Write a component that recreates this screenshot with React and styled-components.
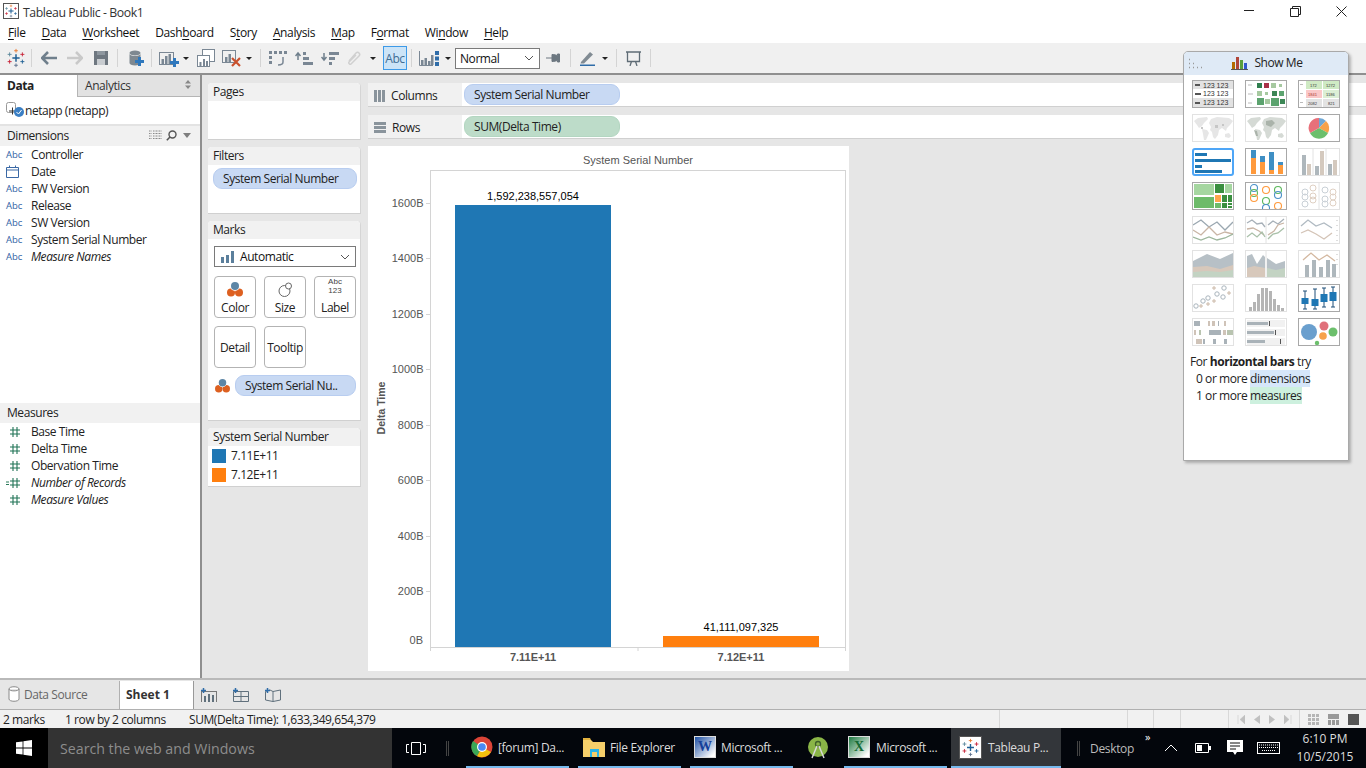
import React from "react";
import styled, { createGlobalStyle } from "styled-components";

const Global = createGlobalStyle`
  html, body { margin: 0; padding: 0; background: #e6e6e6; }
  body { font-family: "Open Sans", "Noto Sans", sans-serif; font-size: 12px; color: #1c1c1c; letter-spacing: -0.43px; }
  * { box-sizing: border-box; }
`;

const Screen = styled.div`position: relative; width: 1366px; height: 768px; overflow: hidden; display: flex; flex-direction: column;`;

/* ---------- title + menu ---------- */
const TitleBar = styled.div`height: 22px; background: #fff; display: flex; align-items: center; padding-left: 3px; flex: none;`;
const TitleIcon = styled.div`width: ${p => p.$s || 16}px; height: ${p => p.$s || 16}px; border: 1px solid #555; display: flex; align-items: center; justify-content: center; background: #fff; flex: none;`;
const TitleText = styled.span`margin-left: 4px; font-size: 12.3px; color: #333; position: relative; top: 1px;`;
const WinControls = styled.div`margin-left: auto; display: flex; align-items: center; height: 20px; margin-right: 2px;`;
const WinBtn = styled.div`width: 46px; height: 20px; display: flex; align-items: center; justify-content: center;`;
const MenuBar = styled.div`height: 21px; background: #fff; display: flex; align-items: center; gap: 16px; padding-left: 8px; flex: none;`;
const MenuItem = styled.span`font-size: 12px; color: #111; letter-spacing: -0.38px; u { text-underline-offset: 2px; text-decoration-thickness: 1px; }`;

/* ---------- toolbar ---------- */
const Toolbar = styled.div`height: 32px; background: #f0f0f0; border-bottom: 2px solid #8f8f8f; display: flex; align-items: center; padding-left: 5px; flex: none;`;
const Tool = styled.div`margin-left: ${p => p.$ml || 0}px; width: ${p => p.$w}px; height: 20px; display: flex; align-items: center; justify-content: center; flex: none;`;
const ToolSep = styled.div`margin-left: ${p => p.$ml}px; width: 1px; height: 18px; background: #d4d4d4; flex: none;`;
const Caret = styled.div`margin-left: ${p => p.$ml}px; margin-right: -1px; width: 0; height: 0; border: 3px solid transparent; border-top: 3px solid #222; border-bottom: 0; flex: none;`;
const AbcToggle = styled.div`margin-left: ${p => p.$ml}px; width: 24px; height: 24px; background: #cce4f7; border: 1px solid #3d9ae8; color: #3f6d94; font-size: 12px; display: flex; align-items: center; justify-content: center; flex: none;`;
const Select = styled.div`margin-left: ${p => p.$ml}px; width: ${p => p.$w}px; height: 21px; background: #fff; border: 1px solid #7a7a7a; display: flex; align-items: center; justify-content: space-between; padding: 0 5px 0 4px; font-size: 12px; color: #111; flex: none;`;

/* ---------- body ---------- */
const Body = styled.div`flex: 1; display: flex; min-height: 0; background: #e6e6e6; border-bottom: 2px solid #b9b9b9;`;
const Sidebar = styled.div`width: 202px; flex: none; background: #fff; border-right: 2px solid #8f8f8f; display: flex; flex-direction: column;`;
const TabRow = styled.div`height: 22px; display: flex; flex: none;`;
const DataTab = styled.div`width: 77px; font-weight: 700; color: #222; padding: 2px 0 0 7px;`;
const AnalyticsTab = styled.div`flex: 1; background: #e2e2e2; border-left: 1px solid #b5b5b5; border-bottom: 1px solid #b5b5b5; padding: 2px 0 0 7px; color: #333; display: flex; justify-content: space-between; align-items: flex-start;`;
const SortArrows = styled.div`margin: 3px 9px 0 0; display: flex;`;
const SourceRow = styled.div`height: 29px; flex: none; border-bottom: 2px solid #e3e3e3; display: flex; align-items: center; padding: 0 0 1px 6px; gap: 0; color: #222;`;
const SectionHead = styled.div`height: 20px; flex: none; background: #f1f1f1; display: flex; align-items: center; padding: 0 0 2px 7px; color: #222; justify-content: space-between;`;
const HeadTools = styled.div`display: flex; gap: 4px; align-items: center; margin-right: 7px;`;
const FieldList = styled.div`height: ${p => p.$h}px; flex: none;`;
const Field = styled.div`height: 17px; display: flex; align-items: center; font-style: ${p => (p.$italic ? "italic" : "normal")}; color: #222;`;
const FieldIcon = styled.div`width: 31px; flex: none; padding-left: 6px; display: flex; align-items: center; color: #2f62a5; font-size: 9.5px; letter-spacing: 0; font-style: normal;`;

const CardsCol = styled.div`width: 153px; margin-left: 6px; padding-top: 8px; flex: none; display: flex; flex-direction: column; gap: 7px;`;
const Card = styled.div`height: ${p => p.$h}px; background: #fff; border-radius: 4px 4px 0 0; border-right: 1px solid #d5d5d5; border-bottom: 1px solid #d0d0d0; flex: none;`;
const CardHead = styled.div`height: 18px; background: #f1f1f1; border-radius: 4px 4px 0 0; padding: 0 0 2px 5px; display: flex; align-items: center; color: #222;`;
const Pill = styled.div`height: 21px; border-radius: 9px; background: ${p => (p.$green ? "#bddcc9" : "#c8d9f3")}; border: 1px solid ${p => (p.$green ? "#b3d6c1" : "#b8cdf0")}; display: flex; align-items: center; padding-left: 9px; color: #222; width: ${p => p.$w}px; flex: none;`;
const FilterBody = styled.div`padding: 3px 0 0 5px;`;
const MarksBody = styled.div`padding: 7px 0 0 6px; display: flex; flex-direction: column;`;
const MarkSelect = styled(Select)`margin: 0; width: 142px; padding: 0 5px; font-size: 12px;`;
const MarkGroup = styled.span`display: flex; align-items: center; gap: 6px; margin-left: 1px;`;
const MarkGrid = styled.div`margin-top: 9px; display: grid; grid-template-columns: repeat(3, 42px); grid-auto-rows: 42px; gap: 8px;`;
const MarkBtn = styled.div`border: 1px solid #b3b3b3; border-radius: 4px; background: #fff; display: flex; flex-direction: column; align-items: center; justify-content: ${p => (p.$solo ? "center" : "flex-end")}; padding-bottom: ${p => (p.$solo ? 0 : 1)}px; color: #222;`;
const MarkIconSlot = styled.div`height: 20px; display: flex; align-items: center; justify-content: center; color: #444;`;
const AbcStack = styled.div`font-family: "Liberation Sans", sans-serif; font-size: 8px; line-height: 9.5px; text-align: center; letter-spacing: 0; margin-top: -6px;`;
const MarkPillRow = styled.div`margin-top: 7px; display: flex; align-items: center; gap: 5px; margin-left: 1px;`;
const LegendRow = styled.div`height: 19px; display: flex; align-items: center; padding-left: 4px; gap: 5px; color: #222;`;
const Swatch = styled.div`width: 14px; height: 14px; background: ${p => p.$c};`;

const Main = styled.div`flex: 1; margin-left: 7px; padding-top: 8px; display: flex; flex-direction: column; min-width: 0;`;
const Shelf = styled.div`height: 24px; margin-bottom: 8px; display: flex; background: #fff; border-bottom: 1px solid #d0d0d0; flex: none;`;
const ShelfLabel = styled.div`width: 94px; background: #f1f1f1; display: flex; align-items: center; gap: 6px; padding: 2px 0 0 6px; color: #222; flex: none;`;
const ShelfPills = styled.div`padding: 1px 0 0 2px; display: flex;`;
const ChartCard = styled.div`width: 481px; height: 525px; margin-top: -1px; background: #fff; flex: none;`;

/* ---------- show me ---------- */
const ShowMe = styled.div`position: absolute; left: 1183px; top: 51px; width: 166px; height: 410px; background: #fff; border: 1px solid #a9a9a9; border-radius: 5px 5px 0 0; box-shadow: 2px 2px 3px rgba(0,0,0,.25);`;
const ShowHead = styled.div`position: relative; height: 23px; background: #dfeaf6; border-radius: 4px 4px 0 0; display: flex; align-items: center; justify-content: center; gap: 6px; color: #222; padding: 0 0 2px 2px;`;
const Grip = styled.svg`position: absolute; left: 4px; top: 6px;`;
const ThumbGrid = styled.div`margin: 5px 0 0 8px; display: grid; grid-template-columns: repeat(3, 42px); grid-auto-rows: 28px; column-gap: 11px; row-gap: 6px;`;
const Thumb = styled.div`width: 42px; height: 28px; background: #fff; display: flex; border: ${p => (p.$s === "sel" ? "2px solid #4ea6f7" : p.$s === "on" ? "1px solid #a8a8a8" : "1px solid #e2e2e2")}; border-radius: ${p => (p.$s === "sel" ? 3 : 0)}px; svg { width: 100%; height: 100%; display: block; }`;
const Hint = styled.div`margin: 7px 0 0 6px; line-height: 17px; color: #222;`;
const HintLine = styled.div`padding-left: ${p => (p.$in ? 6 : 0)}px;`;
const Mark = styled.span`background: ${p => p.$c};`;

/* ---------- tabs / status ---------- */
const SheetBar = styled.div`height: 29px; background: #e6e6e6; flex: none; display: flex; padding-top: 1px;`;
const SourceTab = styled.div`width: 120px; display: flex; align-items: center; gap: 4px; padding: 0 0 2px 8px; color: #666; border-right: 1px solid #b0b0b0;`;
const SheetTab = styled.div`width: 74px; background: #fff; font-weight: 700; color: #333; display: flex; align-items: center; padding: 0 0 2px 6px; border-right: 1px solid #999; letter-spacing: 0;`;
const SheetTools = styled.div`display: flex; align-items: center; gap: 16px; padding-left: 7px;`;
const StatusBar = styled.div`height: 19px; background: #f1f1f1; border-top: 1px solid #b0b0b0; flex: none; display: flex; align-items: center; color: #222; position: relative;`;
const StatusText = styled.span`margin-left: ${p => p.$ml || 0}px; width: ${p => p.$w}px; flex: none;`;
const StatusCell = styled.div`width: ${p => p.$w}px; height: 100%; border-left: 1px solid #d8d8d8; display: flex; align-items: center; justify-content: ${p => (p.$around ? "space-around" : "flex-start")}; flex: none; padding: 0 ${p => (p.$around ? 3 : 0)}px;`;
const StatusFill = styled.div`flex: 1;`;

const Taskbar = styled.div`height: 40px; background: #03060c; flex: none; display: flex; align-items: stretch; color: #dcdcdc; font-size: 12px; letter-spacing: -0.33px;`;
const StartBtn = styled.div`width: 48px; display: flex; align-items: center; justify-content: center; background: #000;`;
const SearchBox = styled.div`width: 344px; background: #333; color: #8d8d8d; font-size: 14.2px; display: flex; align-items: center; padding-left: 12px; letter-spacing: 0;`;
const TaskIcon = styled.div`margin-left: ${p => p.$ml}px; width: ${p => p.$w}px; flex: none; display: flex; align-items: center; justify-content: center;`;
const TaskSep = styled.div`margin-left: ${p => p.$ml}px; width: 3px; flex: none; align-self: center; height: 15px; border-left: 1px solid #444; border-right: 1px solid #444;`;
const TaskApp = styled.div`margin-left: ${p => p.$ml}px; width: ${p => p.$w}px; flex: none; display: flex; align-items: center; gap: ${p => p.$gap || 5}px; padding-left: ${p => p.$pl || 5}px; background: ${p => (p.$active ? "#33363a" : "transparent")}; border-bottom: 2px solid ${p => (p.$line ? "#76b9ed" : "transparent")}; white-space: nowrap;`;
const WordBadge = styled.div`width: 22px; height: 22px; background: linear-gradient(135deg,#1d4fa3,#fff 90%); color: #16409a; font-weight: 700; font-size: 14px; display: flex; align-items: center; justify-content: center; border: 1px solid #ddd; letter-spacing: 0; font-family: "Liberation Serif", serif;`;
const ExcelBadge = styled(WordBadge)`background: linear-gradient(135deg,#1d7a42,#fff 90%); color: #156b36;`;
const DesktopLabel = styled.div`margin-left: 10px; width: 55px; flex: none; align-self: center; color: #bbb;`;
const More = styled.div`width: 10px; margin-top: 3px; flex: none; font-size: 11px; line-height: 11px; color: #fff; letter-spacing: -1px;`;
const Clock = styled.div`margin-left: 9px; width: 72px; flex: none; text-align: center; align-self: center; line-height: 18px; color: #ddd; letter-spacing: 0;`;

/* ---------- drawings ---------- */
const Cross = ({ x, y, s = 3, w = 1, c }) => (
  <path d={`M${x - s} ${y}H${x + s}M${x} ${y - s}V${y + s}`} stroke={c} strokeWidth={w} fill="none" />
);
const TableauMark = ({ size = 22 }) => (
  <svg width={size} height={size} viewBox="0 0 22 22">
    <Cross x={11} y={11} s={4} w={1.6} c="#1f5f94" />
    <Cross x={11} y={3} s={2} w={1} c="#e8762c" />
    <Cross x={11} y={19} s={2} w={1} c="#5b6f8c" />
    <Cross x={4} y={7} s={2.2} w={1} c="#59879b" />
    <Cross x={18} y={7} s={2.2} w={1} c="#c72035" />
    <Cross x={4} y={15} s={2.2} w={1} c="#c72035" />
    <Cross x={18} y={15} s={2.2} w={1} c="#1f5f94" />
  </svg>
);
const Ic = {
  Back: () => <svg width="16" height="14" viewBox="0 0 16 14"><path d="M7 1 1 7l6 6M1 7h15" stroke="#6f7f8c" strokeWidth="2.6" fill="none" /></svg>,
  Fwd: () => <svg width="16" height="14" viewBox="0 0 16 14"><path d="M9 1l6 6-6 6M15 7H0" stroke="#c9c9c9" strokeWidth="2.6" fill="none" /></svg>,
  Save: () => <svg width="14" height="14" viewBox="0 0 14 14"><path d="M0 0h14v14H0z" fill="#6e7780" /><rect x="3" y="8" width="8" height="6" fill="#c8ccd0" /><rect x="3" y="0" width="8" height="4" fill="#8e979f" /></svg>,
  NewData: () => <svg width="15" height="17" viewBox="0 0 15 17"><ellipse cx="6" cy="3" rx="5.5" ry="2.4" fill="#7e8890" /><path d="M.5 4v9c0 1.5 2.5 2.5 5.5 2.5s5.500-1 5.500-2.500V4c-1 1.500-3 2-5.500 2S1.500 5.500.5 4z" fill="#7e8890" /><path d="M10 8h3v3h3v3h-3v3h-3v-3H7v-3h3z" fill="#2f78bd" transform="translate(-1 -1)" /></svg>,
  NewWs: () => <svg width="20" height="17" viewBox="0 0 20 17"><rect x=".5" y="2.500" width="14" height="12" fill="none" stroke="#7a8794" /><rect x="2.500" y="9" width="2.500" height="5" fill="#7a8794" /><rect x="6" y="6" width="2.500" height="8" fill="#7a8794" /><rect x="9.500" y="4" width="2.500" height="10" fill="#7a8794" /><path d="M14 8h3v3h3v3h-3v3h-3v-3h-3v-3h3z" fill="#2f78bd" /></svg>,
  Dup: () => <svg width="18" height="18" viewBox="0 0 18 18"><rect x="5.500" y=".5" width="12" height="12" fill="#fff" stroke="#7a8794" /><rect x=".5" y="6.500" width="12" height="11" fill="#fff" stroke="#7a8794" /><rect x="2.500" y="13" width="2" height="4" fill="#7a8794" /><rect x="6" y="10" width="2" height="7" fill="#7a8794" /><rect x="9" y="12" width="2" height="5" fill="#7a8794" /></svg>,
  Clear: () => <svg width="19" height="18" viewBox="0 0 19 18"><rect x=".5" y="1.500" width="13" height="12" fill="none" stroke="#7a8794" /><rect x="3" y="8" width="2.500" height="5" fill="#7a8794" /><rect x="6.500" y="5" width="2.500" height="8" fill="#7a8794" /><path d="M10 9l8 8M18 9l-8 8" stroke="#c9502c" strokeWidth="2.200" /></svg>,
  Swap: () => <svg width="18" height="17" viewBox="0 0 18 17"><g fill="#7a8794"><rect x="0" y="1" width="3" height="3" /><rect x="5" y="1" width="3" height="3" /><rect x="10" y="1" width="3" height="3" /><rect x="15" y="1" width="3" height="3" /><rect x="0" y="6" width="3" height="3" /><rect x="0" y="11" width="3" height="3" /></g><path d="M14 7v5c0 2-2 3-5 3" stroke="#7a8794" strokeWidth="1.500" fill="none" /></svg>,
  SortA: () => <svg width="18" height="15" viewBox="0 0 18 15"><path d="M3 9V2M.5 5 3 2l2.500 3" stroke="#6f7f8c" strokeWidth="1.500" fill="none" /><g fill="#7a8794"><rect x="8" y="1" width="3" height="3" /><rect x="8" y="6" width="6" height="3" /><rect x="8" y="11" width="10" height="3" /></g></svg>,
  SortD: () => <svg width="18" height="15" viewBox="0 0 18 15"><path d="M3 2v7M.5 6 3 9l2.500-3" stroke="#6f7f8c" strokeWidth="1.500" fill="none" /><g fill="#7a8794"><rect x="8" y="1" width="10" height="3" /><rect x="8" y="6" width="6" height="3" /><rect x="8" y="11" width="3" height="3" /></g></svg>,
  Clip: () => <svg width="17" height="17" viewBox="0 0 17 17"><path d="M3 11l7-8c2-2 5 1 3 3l-8 8c-1 1-3-1-2-2l7-7" stroke="#d0d0d0" strokeWidth="1.500" fill="none" /></svg>,
  Chart: () => <svg width="20" height="15" viewBox="0 0 20 15"><path d="M.5 0v14.500H14" stroke="#7a8794" fill="none" /><g fill="#7a8794"><rect x="2" y="9" width="2.500" height="5" /><rect x="5.500" y="7" width="2.500" height="7" /><rect x="9" y="10" width="2.500" height="4" /><rect x="12" y="4" width="2.500" height="10" /></g><g fill="#2f6ca8"><rect x="16" y="0" width="4" height="4" /><rect x="16" y="5.500" width="4" height="4" /><rect x="16" y="11" width="4" height="4" /></g></svg>,
  Pin: () => <svg width="15" height="10" viewBox="0 0 15 10"><path d="M0 5h6M6 1.500h1.500l4 1V1h2v8h-2V7.500l-4 1H6z" stroke="#6c7780" fill="#6c7780" strokeWidth="1" /></svg>,
  Pen: () => <svg width="15" height="15" viewBox="0 0 15 15"><path d="M1 11 10 1l3 2.500-9 9-3.500 0z" fill="#818b93" /><rect x="0" y="13.500" width="15" height="1.500" fill="#2f6ca8" /></svg>,
  Present: () => <svg width="15" height="15" viewBox="0 0 15 15"><path d="M0 1h15M1.500 1v9.500h12V1M4 15l1.500-4.500M11 15 9.500 10.500" stroke="#5f6c76" strokeWidth="1.300" fill="none" /></svg>,
  Chevron: ({ c = "#555" }) => <svg width="10" height="6" viewBox="0 0 10 6"><path d="M1 1l4 4 4-4" stroke={c} fill="none" /></svg>,
  DataSource: () => <svg width="12" height="16" viewBox="0 0 12 16"><path d="M1 3c0-3 10-3 10 0v10c0 3-10 3-10 0z M1 3c0 2.500 10 2.500 10 0" stroke="#8a8a8a" fill="#fff" /></svg>,
};
const ColorDots = ({ size = 16 }) => (
  <svg width={size} height={size} viewBox="0 0 16 16">
    <circle cx="4" cy="11.500" r="4" fill="#dd6020" /><circle cx="12" cy="11.500" r="4" fill="#dd6020" />
    <circle cx="8" cy="5" r="4.800" fill="#fff" /><circle cx="8" cy="5" r="4" fill="#5d86a6" />
  </svg>
);
const Hash = ({ pre }) => (
  <svg width="16" height="12" viewBox="0 0 16 12">
    {pre && <path d="M0 5h3M0 7.500h3" stroke="#2b7a5a" />}
    <path d="M7 1v10M11 1v10M4 4h10M4 8h10" stroke="#1f7355" strokeWidth="1.100" />
  </svg>
);
const Calendar = () => (
  <svg width="13" height="13" viewBox="0 0 13 13"><path d="M.5 2.500h12v10H.5zM.5 5h12M3.500.5v2M9.500.5v2" stroke="#3a68a5" fill="none" /></svg>
);

/* ---------- show me thumbs (40 × 26 viewBox) ---------- */
const V = ({ children }) => <svg viewBox="0 0 40 26" preserveAspectRatio="none">{children}</svg>;
const Rs = ({ list, f }) => list.map(([x, y, w, h, c], i) => <rect key={i} x={x} y={y} width={w} height={h} fill={c || f} />);
const Cs = ({ list, s, sw = 1 }) => list.map(([x, y, r, c], i) => <circle key={i} cx={x} cy={y} r={r} fill="none" stroke={c || s} strokeWidth={sw} />);
const Ln = ({ d, c, w = 1.3 }) => <path d={d} fill="none" stroke={c} strokeWidth={w} />;
const T = ({ x, y, s = 7, children, c = "#333" }) => <text x={x} y={y} fontSize={s} fill={c} fontFamily="Liberation Sans, sans-serif" letterSpacing="0">{children}</text>;
const WORLD = "M1 6l4-3 9-1 1 2-4 4-2 3-3 2-2-3zM9 14l5 1 2 3-3 7h-2l-1-6zM18 4l6-2 12 1 4 3-3 4-3 3-1 3-4-3-3 2-3-2-5-1-2-4zM18 12h5l3 3-1 5-3 4-2-2-1-5-2-2zM32 19l4-1 2 3-2 2-4-1z";

const thumbs = [
  ["on", <V><Rs list={[[0,0,40,8,"#e2e2e2"],[0,17,40,9,"#e2e2e2"],[2,3,5,2,"#555"],[2,12,6,2,"#555"],[2,21,5,2,"#555"]]} /><T x={10} y={6.500}>123 123</T><T x={10} y={15}>123 123</T><T x={10} y={24}>123 123</T></V>],
  ["on", <V><Rs list={[[2,3,4,2,"#ddd"],[2,12,5,2,"#ddd"],[2,21,4,2,"#ddd"],[11,2,5,5,"#2f7f4f"],[18,2,5,5,"#a83248"],[25,2,5,5,"#a6c9a0"],[33,3,3,3,"#a6c9a0"],[11,10,5,5,"#a6c9a0"],[19,11,3,3,"#a6c9a0"],[26,10,5,5,"#3d8756"],[33,10,5,5,"#5ca36f"],[11,17,7,7,"#5ca36f"],[19,18,5,5,"#a6c9a0"],[25,17,8,8,"#5ca36f"],[34,18,5,5,"#3d8756"]]} /></V>],
  ["on", <V><Rs list={[[7,0,16,8,"#cfeac4"],[24,0,16,8,"#cfeac4"],[7,9,16,8,"#fbc8c8"],[24,9,16,8,"#dcefd5"],[7,18,16,8,"#e3e3e3"],[24,18,16,8,"#e3e3e3"],[1,3,3,1,"#bbb"],[1,12,3,1,"#bbb"],[1,21,3,1,"#bbb"]]} /><T x={11} y={6} s={4}>172</T><T x={27} y={6} s={4}>1272</T><T x={9} y={15} s={4} c="#a33">1841</T><T x={27} y={15} s={4}>1186</T><T x={9} y={24} s={4}>2082</T><T x={29} y={24} s={4}>821</T></V>],
  ["off", <V><path d={WORLD} fill="#e6e6e6" /><Rs list={[[8,12,2,2,"#c6c6c6"],[22,10,3,3,"#c6c6c6"],[29,9,2,2,"#c6c6c6"]]} /></V>],
  ["off", <V><path d={WORLD} fill="#d5dad5" /><path d="M20 6l6-1 3 3-4 4-5-2zM8 15l3 1 1 5-2 0z" fill="#aab3aa" /></V>],
  ["on", <V><path d="M20 13V3a10 10 0 0 1 7 3z" fill="#6fa8d6" /><path d="M20 13l7-7a10 10 0 0 1 2 12z" fill="#f7a24b" /><path d="M20 13l9 5a10 10 0 0 1-18 0z" fill="#6cbf6c" /><path d="M20 13l-9 5A10 10 0 0 1 20 3z" fill="#e8707a" /></V>],
  ["sel", <svg viewBox="0 0 38 24" preserveAspectRatio="none"><Rs f="#1f77b4" list={[[1,3,12,3],[1,9,36,3],[1,15,7,3],[1,20,27,3]]} /></svg>],
  ["on", <V><Rs list={[[5,1,5,8,"#3f8fc4"],[5,9,5,16,"#ff9a3c"],[14,7,5,6,"#3f8fc4"],[14,13,5,12,"#ff9a3c"],[23,3,5,18,"#3f8fc4"],[23,21,5,4,"#ff9a3c"],[32,13,5,3,"#3f8fc4"],[32,16,5,9,"#ff9a3c"]]} /></V>],
  ["off", <V><Ln d="M14 0v26M27 0v26" c="#e2e2e2" w={1} /><Rs list={[[3,6,4,20,"#aeb7bc"],[8,15,4,11,"#d4c9be"],[16,17,4,9,"#aeb7bc"],[21,2,4,24,"#d4c9be"],[29,15,4,11,"#aeb7bc"],[34,11,4,15,"#d4c9be"]]} /></V>],
  ["on", <V><Rs list={[[1,1,20,11,"#a5d6a0"],[22,1,9,9,"#3a8f3f"],[32,1,7,9,"#a5d6a0"],[1,14,20,11,"#6dbb6a"],[22,12,6,7,"#ffa64d"],[29,12,5,7,"#3a8f3f"],[35,12,4,7,"#3a8f3f"],[22,20,6,5,"#6dbb6a"],[29,20,5,5,"#3a8f3f"],[35,20,4,2,"#3a8f3f"],[35,23,4,2,"#3a8f3f"]]} /></V>],
  ["on", <V><Cs sw={1.100} list={[[8,5,3.500,"#4a90c8"],[8,10,3.500,"#5cb85c"],[8,15,3.500,"#ff9a3c"],[20,7,3.500,"#ff9a3c"],[20,18,3.500,"#5cb85c"],[20,25,3.500,"#4a90c8"],[32,7,3.500,"#5cb85c"],[32,12,3.500,"#4a90c8"],[32,23,3.500,"#ff9a3c"]]} /></V>],
  ["off", <V><Ln d="M20 0v26" c="#e2e2e2" w={1} /><Cs list={[[6,9,3,"#c9d0d6"],[6,14,3,"#c9d0d6"],[6,21,3,"#c9d0d6"],[14,5,3,"#dfd0c3"],[14,13,3,"#dfd0c3"],[14,17,3,"#dfd0c3"],[26,7,3,"#c9d0d6"],[26,16,3,"#c9d0d6"],[26,21,3,"#c9d0d6"],[34,9,3,"#dfd0c3"],[34,14,3,"#dfd0c3"],[34,20,3,"#dfd0c3"]]} /></V>],
  ["off", <V><Ln c="#9aa7b0" d="M0 8 8 3l8 7 8-5 8 8 8-8" /><Ln c="#c9b5a5" d="M0 13l8 5 8-8 8 8 8-3 8 2" /><Ln c="#9cb69c" d="M0 20l8 3 8-3 8 3 8-2 8-4" /></V>],
  ["off", <V><Ln c="#e2e2e2" d="M20 0v26" w={1} /><Ln c="#a7b0b8" d="M1 6l5-3 5 4 5-1 3 4" /><Ln c="#c9b5a5" d="M1 12l6-1 6 3 5 4" /><Ln c="#a9c0a9" d="M1 20l5-4 5 4 5-5 3 5" /><Ln c="#a7b0b8" d="M22 8l5-4 5 3 6-5" /><Ln c="#c9b5a5" d="M22 18l6-4 4-6 6-2" /><Ln c="#a9c0a9" d="M22 22l5-5 5-1 6-5" /></V>],
  ["off", <V><Ln c="#b0bac2" d="M2 9l7-6 8 6 8-3 8 5" /><Ln c="#d4c4b7" d="M2 16l7-3 8 4 8 5 8-6" /><Rs f="#d0d0d0" list={[[37,3,2,.7],[37,8,2,.7],[37,13,2,.7],[37,18,2,.7],[37,23,2,.7]]} /></V>],
  ["off", <V><path d="M0 10l14-7 13 5 13-6v24H0z" fill="#b7c0c6" /><path d="M0 16l14-1 13 3 13-4v12H0z" fill="#d7c8bb" /><path d="M0 21l14-1 13 1 13-2v7H0z" fill="#c3d3c3" /></V>],
  ["off", <V><path d="M1 5l5-2 5 10 6-9 2 2v20H1z" fill="#b7c0c6" /><path d="M1 17l7-2 11 2v9H1z" fill="#d7c8bb" /><path d="M21 7l9 6 9-3v16H21z" fill="#b7c0c6" /><path d="M21 17l9 2 9-2v9H21z" fill="#c3d3c3" /><Ln c="#e2e2e2" d="M20 0v26" w={1} /></V>],
  ["off", <V><Rs f="#aeb7bc" list={[[6,14,4,12],[13,9,4,17],[20,16,4,10],[27,9,4,17],[33,13,4,13]]} /><Ln c="#d4b8a0" d="M4 9l8-7 8 7 8-5 8 6" /><Rs f="#d0d0d0" list={[[37,3,2,.7],[37,8,2,.7],[37,13,2,.7]]} /></V>],
  ["off", <V><Cs s="#a9b4bc" list={[[3,21,2.200],[10,16,2.200],[15,13,2.200],[24,9,2.200],[30,12,2.200],[31,3,2.200]]} /><Ln w={1} c="#cbb8a7" d="M6 21h4M8 19v4M13 19h4M15 17v4M19 16h4M21 14v4M19 3h4M21 1v4M34 8h4M36 6v4" /></V>],
  ["off", <V><Rs f="#b5b5b5" list={[[3,22,3,4],[7,17,3,9],[11,9,3,17],[15,3,3,23],[19,3,3,23],[23,6,3,20],[27,14,3,12],[31,20,3,6],[35,23,3,3]]} /></V>],
  ["on", <V><Ln w={1} c="#1f4e79" d="M6 6v18M4 6h4M4 24h4M16 4v20M14 4h4M14 24h4M25 3v19M23 3h4M23 22h4M34 2v20M32 2h4M32 22h4" /><Rs list={[[2.500,13,7,6,"#1f77b4"],[12.500,14,7,7,"#1f77b4"],[21.500,9,7,8,"#1f77b4"],[30.500,7,7,9,"#1f77b4"]]} /></V>],
  ["off", <V><Rs list={[[1,2,6,5,"#a9b2b8"],[15,2,2,5,"#cfc3b8"],[19,2,3,5,"#cfc3b8"],[25,2,1,5,"#a9b2b8"],[31,2,2,5,"#cfc3b8"],[1,11,2,5,"#cfc3b8"],[6,11,2,5,"#b9c4b0"],[16,11,12,5,"#a9b2b8"],[30,11,3,5,"#cfc3b8"],[34,11,6,5,"#b9c4b0"],[3,20,6,5,"#cfc3b8"],[10,20,2,5,"#a9b2b8"],[20,20,3,5,"#a9b2b8"],[31,20,3,5,"#a9b2b8"]]} /></V>],
  ["off", <V><Rs list={[[1,1,38,7,"#f1f1f1"],[1,10,38,7,"#f1f1f1"],[1,19,38,7,"#f1f1f1"],[1,3,21,3,"#a9b2b8"],[1,12,27,3,"#a9b2b8"],[1,21,18,3,"#a9b2b8"],[23,2,1,5,"#555"],[29,11,1,5,"#555"],[34,20,1,5,"#555"]]} /></V>],
  ["on", <V><circle cx="10" cy="13" r="8" fill="#6a9fce" /><circle cx="25" cy="7" r="4.500" fill="#e0707a" /><circle cx="24" cy="17" r="3.800" fill="#f7a24b" /><circle cx="34" cy="13" r="4.500" fill="#6cbf6c" /><circle cx="18" cy="24" r="2.200" fill="#6cbf6c" /></V>],
];

const dims = [["Controller"], ["Date", "cal"], ["FW Version"], ["Release"], ["SW Version"], ["System Serial Number"], ["Measure Names", null, true]];
const meas = [["Base Time"], ["Delta Time"], ["Obervation Time"], ["Number of Records", "pre", true], ["Measure Values", null, true]];
const menus = [["", "F", "ile"], ["", "D", "ata"], ["", "W", "orksheet"], ["Dash", "b", "oard"], ["S", "t", "ory"], ["", "A", "nalysis"], ["", "M", "ap"], ["F", "o", "rmat"], ["Wi", "n", "dow"], ["", "H", "elp"]];
const ticks = [["1600B", 203], ["1400B", 258], ["1200B", 314], ["1000B", 369], ["800B", 425], ["600B", 480], ["400B", 536], ["200B", 591]];

const AX = "#d4d4d4";
const Chart = () => (
  <svg width="481" height="525" viewBox="368 146 481 525" fontFamily="Liberation Sans, Arial, sans-serif" fontSize="11" letterSpacing="0">
    <text x="638" y="164" textAnchor="middle" fill="#555" fontSize="11">System Serial Number</text>
    <path d="M430.500 170.500H846M430.500 170V651M845.500 170V651M430 647.500H846M638 647V651" stroke={AX} fill="none" />
    {ticks.map(([t, y]) => (
      <g key={t}>
        <path d={`M426 ${y + .5}H430`} stroke={AX} />
        <text x="423.500" y={y + 4} textAnchor="end" fill="#555">{t}</text>
      </g>
    ))}
    <text x="423" y="644" textAnchor="end" fill="#555">0B</text>
    <text transform="translate(384.500 408) rotate(-90)" textAnchor="middle" fill="#555" fontSize="10.500" fontWeight="700">Delta Time</text>
    <rect x="455" y="205" width="156" height="442" fill="#1f77b4" />
    <rect x="663" y="636" width="156" height="11" fill="#ff7f0e" />
    <text x="533" y="200" textAnchor="middle" fill="#000">1,592,238,557,054</text>
    <text x="741" y="631" textAnchor="middle" fill="#000">41,111,097,325</text>
    <text x="533" y="661" textAnchor="middle" fill="#555" fontWeight="700">7.11E+11</text>
    <text x="741" y="661" textAnchor="middle" fill="#555" fontWeight="700">7.12E+11</text>
  </svg>
);

export default function App() {
  return (
    <Screen>
      <Global />
      <TitleBar>
        <TitleIcon><TableauMark size={14} /></TitleIcon>
        <TitleText>Tableau Public - Book1</TitleText>
        <WinControls>
          <WinBtn><svg width="10" height="2"><rect width="10" height="1" fill="#222" /></svg></WinBtn>
          <WinBtn><svg width="11" height="11" viewBox="0 0 11 11"><path d="M.5 2.500h8v8h-8zM2.500 2.500v-2h8v8h-2" fill="none" stroke="#222" /></svg></WinBtn>
          <WinBtn><svg width="11" height="11" viewBox="0 0 11 11"><path d="M.5.5l10 10M10.500.5l-10 10" stroke="#222" /></svg></WinBtn>
        </WinControls>
      </TitleBar>
      <MenuBar>
        {menus.map(([a, u, b]) => <MenuItem key={a + u + b}>{a}<u>{u}</u>{b}</MenuItem>)}
      </MenuBar>
      <Toolbar>
        <Tool $w={21}><TableauMark size={20} /></Tool>
        <ToolSep $ml={5} />
        <Tool $ml={9} $w={16}><Ic.Back /></Tool>
        <Tool $ml={10} $w={16}><Ic.Fwd /></Tool>
        <Tool $ml={11} $w={14}><Ic.Save /></Tool>
        <ToolSep $ml={9} />
        <Tool $ml={11} $w={15}><Ic.NewData /></Tool>
        <ToolSep $ml={7} />
        <Tool $ml={7} $w={20}><Ic.NewWs /></Tool>
        <Caret $ml={4} />
        <Tool $ml={9} $w={18}><Ic.Dup /></Tool>
        <Tool $ml={7} $w={19}><Ic.Clear /></Tool>
        <Caret $ml={5} />
        <ToolSep $ml={9} />
        <Tool $ml={8} $w={18}><Ic.Swap /></Tool>
        <Tool $ml={8} $w={18}><Ic.SortA /></Tool>
        <Tool $ml={8} $w={18}><Ic.SortD /></Tool>
        <Tool $ml={7} $w={17}><Ic.Clip /></Tool>
        <Caret $ml={7} />
        <AbcToggle $ml={8}>Abc</AbcToggle>
        <ToolSep $ml={4} />
        <Tool $ml={7} $w={20}><Ic.Chart /></Tool>
        <Caret $ml={6} />
        <Select $ml={5} $w={85}>Normal<Ic.Chevron /></Select>
        <Tool $ml={6} $w={15}><Ic.Pin /></Tool>
        <ToolSep $ml={9} />
        <Tool $ml={9} $w={15}><Ic.Pen /></Tool>
        <Caret $ml={7} />
        <ToolSep $ml={9} />
        <Tool $ml={9} $w={15}><Ic.Present /></Tool>
        <ToolSep $ml={9} />
      </Toolbar>
      <Body>
        <Sidebar>
          <TabRow>
            <DataTab>Data</DataTab>
            <AnalyticsTab>Analytics
              <SortArrows><svg width="6" height="9" viewBox="0 0 6 9"><path d="M3 0l3 3.500H0zM3 9 0 5.500h6z" fill="#888" /></svg></SortArrows>
            </AnalyticsTab>
          </TabRow>
          <SourceRow>
            <svg width="19" height="16" viewBox="0 0 19 16"><rect x=".5" y=".5" width="9" height="10" rx="2" fill="#fff" stroke="#999" /><path d="M3 9h7M6.500 5.500v7" stroke="#333" /><circle cx="13" cy="10" r="5" fill="#3b7fc4" /><path d="M10.500 10l2 2 3-4" stroke="#fff" fill="none" /></svg>
            netapp (netapp)
          </SourceRow>
          <SectionHead>Dimensions
            <HeadTools>
              <svg width="13" height="10" viewBox="0 0 13 10"><path d="M0 1h3M4 1h9M0 3.500h3M4 3.500h9M0 6h3M4 6h9M0 8.500h3M4 8.500h9" stroke="#8a8a8a" strokeDasharray="1 .5" /></svg>
              <svg width="11" height="11" viewBox="0 0 11 11"><circle cx="6.500" cy="4.500" r="3.500" fill="none" stroke="#555" strokeWidth="1.400" /><path d="M4 7 .8 10.200" stroke="#555" strokeWidth="1.600" /></svg>
              <svg width="12" height="12" viewBox="0 0 12 12"><path d="M2 4h8L6 9z" fill="#7e7e7e" /></svg>
            </HeadTools>
          </SectionHead>
          <FieldList $h={257}>
            {dims.map(([n, k, i]) => (
              <Field key={n} $italic={i}><FieldIcon>{k === "cal" ? <Calendar /> : "Abc"}</FieldIcon>{n}</Field>
            ))}
          </FieldList>
          <SectionHead>Measures</SectionHead>
          <FieldList>
            {meas.map(([n, k, i]) => (
              <Field key={n} $italic={i}><FieldIcon><Hash pre={k === "pre"} /></FieldIcon>{n}</Field>
            ))}
          </FieldList>
        </Sidebar>
        <CardsCol>
          <Card $h={57}><CardHead>Pages</CardHead></Card>
          <Card $h={67}>
            <CardHead>Filters</CardHead>
            <FilterBody><Pill $w={144}>System Serial Number</Pill></FilterBody>
          </Card>
          <Card $h={200}>
            <CardHead>Marks</CardHead>
            <MarksBody>
              <MarkSelect>
                <MarkGroup>
                  <svg width="13" height="12" viewBox="0 0 13 12"><g fill="#5b7f9c"><rect x="0" y="6" width="3" height="6" /><rect x="5" y="4" width="3" height="8" /><rect x="10" y="0" width="3" height="12" /></g></svg>
                  Automatic
                </MarkGroup>
                <Ic.Chevron />
              </MarkSelect>
              <MarkGrid>
                <MarkBtn><MarkIconSlot><ColorDots /></MarkIconSlot>Color</MarkBtn>
                <MarkBtn><MarkIconSlot><svg width="15" height="15" viewBox="0 0 15 15"><circle cx="6.500" cy="9" r="5.500" fill="none" stroke="#666" /><circle cx="10.500" cy="4" r="3" fill="#fff" stroke="#666" /></svg></MarkIconSlot>Size</MarkBtn>
                <MarkBtn><MarkIconSlot><AbcStack>Abc<br />123</AbcStack></MarkIconSlot>Label</MarkBtn>
                <MarkBtn $solo>Detail</MarkBtn>
                <MarkBtn $solo>Tooltip</MarkBtn>
              </MarkGrid>
              <MarkPillRow>
                <ColorDots size={15} />
                <Pill $w={121}>System Serial Nu..</Pill>
              </MarkPillRow>
            </MarksBody>
          </Card>
          <Card $h={59}>
            <CardHead>System Serial Number</CardHead>
            <LegendRow><Swatch $c="#1f77b4" />7.11E+11</LegendRow>
            <LegendRow><Swatch $c="#ff7f0e" />7.12E+11</LegendRow>
          </Card>
        </CardsCol>
        <Main>
          <Shelf>
            <ShelfLabel>
              <svg width="11" height="12" viewBox="0 0 11 12"><g fill="#8a949c"><rect x="0" y="0" width="3" height="12" /><rect x="4" y="0" width="3" height="12" /><rect x="8" y="0" width="3" height="12" /></g></svg>
              Columns
            </ShelfLabel>
            <ShelfPills><Pill $w={156}>System Serial Number</Pill></ShelfPills>
          </Shelf>
          <Shelf>
            <ShelfLabel>
              <svg width="12" height="11" viewBox="0 0 12 11"><g fill="#8a949c"><rect x="0" y="0" width="12" height="3" /><rect x="0" y="4" width="12" height="3" /><rect x="0" y="8" width="12" height="3" /></g></svg>
              Rows
            </ShelfLabel>
            <ShelfPills><Pill $w={156} $green>SUM(Delta Time)</Pill></ShelfPills>
          </Shelf>
          <ChartCard><Chart /></ChartCard>
        </Main>
      </Body>
      <SheetBar>
        <SourceTab><Ic.DataSource />Data Source</SourceTab>
        <SheetTab>Sheet 1</SheetTab>
        <SheetTools>
          <svg width="16" height="14" viewBox="0 0 16 14"><path d="M0 3.500h16M.5 3v11M15.500 3v11" stroke="#777" fill="none" /><g fill="#60707c"><rect x="3" y="8" width="2" height="6" /><rect x="7" y="6" width="2" height="8" /><rect x="11" y="7" width="2" height="7" /></g><path d="M0 2.500h5M2.500 0v5" stroke="#2f6ca8" strokeWidth="1.500" /></svg>
          <svg width="16" height="14" viewBox="0 0 16 14"><path d="M.5 3.500h15v10H.5zM.5 8.500h15M8 3.500v10" stroke="#60707c" fill="none" /><path d="M0 2.500h5M2.500 0v5" stroke="#2f6ca8" strokeWidth="1.500" /></svg>
          <svg width="16" height="14" viewBox="0 0 16 14"><path d="M.5 3.500 5 2l3 1.500 7.500-1.500v10L8 13.500 .5 12zM8 3.500v10" stroke="#60707c" fill="none" /><path d="M0 2.500h5M2.500 0v5" stroke="#2f6ca8" strokeWidth="1.500" /></svg>
        </SheetTools>
      </SheetBar>
      <StatusBar>
        <StatusText $ml={3} $w={62}>2 marks</StatusText>
        <StatusText $w={124}>1 row by 2 columns</StatusText>
        <StatusText $w={240}>SUM(Delta Time): 1,633,349,654,379</StatusText>
        <StatusFill />
        <StatusCell $w={128} />
        <StatusCell $w={26} />
        <StatusCell $w={27} />
        <StatusCell $w={48} />
        <StatusCell $w={71} $around>
          <svg width="8" height="9" viewBox="0 0 8 9"><path d="M1 0v9M8 0 3 4.500 8 9z" fill="#c0c0c0" stroke="#c0c0c0" strokeWidth=".5" /></svg>
          <svg width="6" height="9" viewBox="0 0 6 9"><path d="M6 0 0 4.500 6 9z" fill="#c0c0c0" /></svg>
          <svg width="6" height="9" viewBox="0 0 6 9"><path d="M0 0l6 4.500L0 9z" fill="#c0c0c0" /></svg>
          <svg width="8" height="9" viewBox="0 0 8 9"><path d="M7 0v9M0 0l5 4.500L0 9z" fill="#c0c0c0" stroke="#c0c0c0" strokeWidth=".5" /></svg>
        </StatusCell>
        <StatusCell $w={67} $around>
          <svg width="11" height="11" viewBox="0 0 11 11"><g fill="#b5b5b5">{[0, 4, 8].flatMap(x => [0, 4, 8].map(y => <rect key={`${x}${y}`} x={x} y={y} width="3" height="3" />))}</g></svg>
          <svg width="11" height="11" viewBox="0 0 11 11"><g fill="#999"><rect width="11" height="5" /><rect y="6" width="3" height="5" /><rect x="4" y="6" width="3" height="5" /><rect x="8" y="6" width="3" height="5" /></g></svg>
          <svg width="11" height="11" viewBox="0 0 11 11"><rect width="11" height="11" fill="#555" /></svg>
        </StatusCell>
      </StatusBar>
      <Taskbar>
        <StartBtn>
          <svg width="16" height="16" viewBox="0 0 16 16"><path d="M0 2.300 6.600 1.400V7.600H0zM7.400 1.300 16 0V7.600H7.400zM0 8.400H6.600V14.600L0 13.700zM7.400 8.400H16V16L7.400 14.700z" fill="#fff" /></svg>
        </StartBtn>
        <SearchBox>Search the web and Windows</SearchBox>
        <TaskIcon $ml={14} $w={20}>
          <svg width="20" height="13" viewBox="0 0 20 13"><path d="M5.500.5h9v12h-9zM3 2.500H.5v8H3M17 2.500h2.500v8H17" fill="none" stroke="#fff" /></svg>
        </TaskIcon>
        <TaskSep $ml={20} />
        <TaskApp $ml={17} $w={103} $line>
          <svg width="22" height="22" viewBox="0 0 22 22"><circle cx="11" cy="11" r="10.500" fill="#db4437" /><path d="M11 11 20 16A10.500 10.500 0 0 1 6 20z" fill="#f4c20d" /><path d="M11 11 6 20A10.500 10.500 0 0 1 2 5z" fill="#3aa757" /><circle cx="11" cy="11" r="5" fill="#fff" /><circle cx="11" cy="11" r="3.800" fill="#4a8af4" /></svg>
          [forum] Da...
        </TaskApp>
        <TaskApp $ml={9} $w={103} $line>
          <svg width="22" height="20" viewBox="0 0 22 20"><path d="M0 3h8l2 2h12v15H0z" fill="#f6cf6a" /><path d="M0 3V1h7l1 2z" fill="#e3b33f" /><path d="M7 12h9v8h-2v-5H9v5H7z" fill="#2bb5e8" /></svg>
          File Explorer
        </TaskApp>
        <TaskApp $ml={9} $w={103} $line $pl={4}><WordBadge>W</WordBadge>Microsoft ...</TaskApp>
        <TaskIcon $ml={14} $w={22}>
          <svg width="22" height="24" viewBox="0 0 22 24"><circle cx="11" cy="11" r="10" fill="#8ab547" /><circle cx="11" cy="8" r="2.500" fill="none" stroke="#3e5f2a" strokeWidth="1.300" /><path d="M10 10 5 22M12 10l5 12" stroke="#d8d8d8" strokeWidth="1.500" /></svg>
        </TaskIcon>
        <TaskApp $ml={15} $w={103} $line $pl={4} $gap={6}><ExcelBadge>X</ExcelBadge>Microsoft ...</TaskApp>
        <TaskApp $ml={4} $w={110} $active $line $pl={8} $gap={6}>
          <TitleIcon $s={23}><TableauMark size={19} /></TitleIcon>
          Tableau P...
        </TaskApp>
        <TaskSep $ml={16} />
        <DesktopLabel>Desktop</DesktopLabel>
        <More>»</More>
        <TaskIcon $ml={8} $w={16}>
          <svg width="14" height="8" viewBox="0 0 14 8"><path d="M1 7l6-6 6 6" stroke="#fff" fill="none" /></svg>
        </TaskIcon>
        <TaskIcon $ml={16} $w={16}>
          <svg width="16" height="10" viewBox="0 0 16 10"><path d="M.5.500h13v9H.5z" fill="none" stroke="#fff" /><rect x="2" y="2" width="5" height="6" fill="#fff" /><rect x="14" y="3" width="2" height="4" fill="#fff" /></svg>
        </TaskIcon>
        <TaskIcon $ml={16} $w={16}>
          <svg width="16" height="16" viewBox="0 0 16 16"><path d="M0 0h16v12h-6l-2 3-2-3H0z" fill="#fff" /><path d="M3 3h10M3 6h10M3 9h6" stroke="#111" /></svg>
        </TaskIcon>
        <TaskIcon $ml={14} $w={23}>
          <svg width="23" height="12" viewBox="0 0 23 12"><rect x=".5" y=".5" width="22" height="11" fill="none" stroke="#fff" /><path d="M2 3h19M2 5.500h19M5 8.500h13" stroke="#fff" strokeDasharray="1 1" /></svg>
        </TaskIcon>
        <Clock>6:10 PM<br />10/5/2015</Clock>
      </Taskbar>
      <ShowMe>
        <ShowHead>
          <Grip width="14" height="14" viewBox="0 0 14 14"><path d="M1 1.500h1M1 5.500h1M5 5.500h1M1 9.500h1M5 9.500h1M9 9.500h1M13 9.500h1" stroke="#999" strokeWidth="1.500" /></Grip>
          <svg width="17" height="14" viewBox="0 0 17 14"><rect x="1" y="6" width="3" height="7" fill="#b36b00" /><rect x="5" y="1" width="3" height="12" fill="#b0453a" /><rect x="9" y="4" width="3" height="9" fill="#5b9e3c" /><rect x="13" y="7" width="3" height="6" fill="#3355cc" /><path d="M0 13.500h17" stroke="#555" /></svg>
          Show Me
        </ShowHead>
        <ThumbGrid>
          {thumbs.map(([s, c], i) => <Thumb key={i} $s={s}>{c}</Thumb>)}
        </ThumbGrid>
        <Hint>
          <HintLine>For <b>horizontal bars</b> try</HintLine>
          <HintLine $in>0 or more <Mark $c="#d6e7fa">dimensions</Mark></HintLine>
          <HintLine $in>1 or more <Mark $c="#cdf0de">measures</Mark></HintLine>
        </Hint>
      </ShowMe>
    </Screen>
  );
}
